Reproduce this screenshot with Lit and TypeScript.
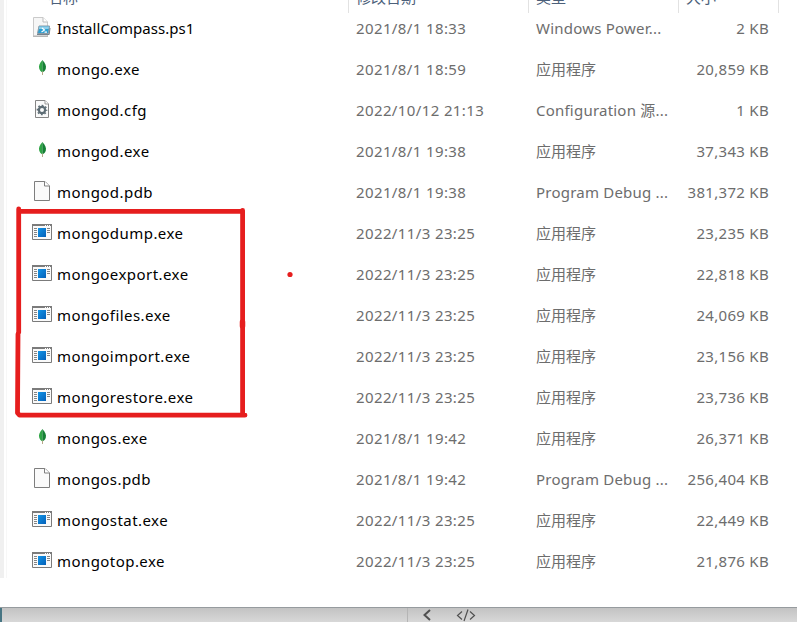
import { LitElement, html, svg, css } from "lit";
import { customElement, property } from "lit/decorators.js";

type Kind = "script" | "leaf" | "config" | "file" | "app";
interface Entry { kind: Kind; name: string; date: string; type: string; size: string; }

const APP = "应用程序";
const e = (kind: Kind, name: string, date: string, type: string, size: string): Entry => ({ kind, name, date, type, size });
const ENTRIES: Entry[] = [
  e("script", "InstallCompass.ps1", "2021/8/1 18:33", "Windows Power...", "2 KB"),
  e("leaf", "mongo.exe", "2021/8/1 18:59", APP, "20,859 KB"),
  e("config", "mongod.cfg", "2022/10/12 21:13", "Configuration 源...", "1 KB"),
  e("leaf", "mongod.exe", "2021/8/1 19:38", APP, "37,343 KB"),
  e("file", "mongod.pdb", "2021/8/1 19:38", "Program Debug ...", "381,372 KB"),
  e("app", "mongodump.exe", "2022/11/3 23:25", APP, "23,235 KB"),
  e("app", "mongoexport.exe", "2022/11/3 23:25", APP, "22,818 KB"),
  e("app", "mongofiles.exe", "2022/11/3 23:25", APP, "24,069 KB"),
  e("app", "mongoimport.exe", "2022/11/3 23:25", APP, "23,156 KB"),
  e("app", "mongorestore.exe", "2022/11/3 23:25", APP, "23,736 KB"),
  e("leaf", "mongos.exe", "2021/8/1 19:42", APP, "26,371 KB"),
  e("file", "mongos.pdb", "2021/8/1 19:42", "Program Debug ...", "256,404 KB"),
  e("app", "mongostat.exe", "2022/11/3 23:25", APP, "22,449 KB"),
  e("app", "mongotop.exe", "2022/11/3 23:25", APP, "21,876 KB"),
];

const ICONS = {
  script: svg`
    <path d="M1.500 1.500H11L15.500 6V20H1.500Z" fill="#f6f6f6" stroke="#cacaca"/>
    <path d="M11 1.500V6H15.500" fill="#fff" stroke="#bcbcbc"/>
    <path d="M1 20.300H16" stroke="#ababab"/>
    <path d="M7 10H17.500L16.500 17.500H5.500Z" fill="#2c9fd2" stroke="#8b9aa5"/>
    <path d="M7.300 10.500H17L16.600 13H6.800Z" fill="#8dd0ec"/>
    <path d="M10 12L12.500 14L9.500 16M12.500 16.200H15" fill="none" stroke="#fff" stroke-width="1.200"/>
    <path d="M5 18.500H17.200L18 12" fill="none" stroke="#75828c"/>`,
  leaf: svg`
    <path d="M10.500 3C7.500 6 6.500 9 7.200 11.500C7.700 13.500 9 14.700 10.400 15.600Z" fill="#2fa546"/>
    <path d="M10.400 3C13.300 6 14.500 9 13.800 11.500C13.200 13.600 12 14.700 10.400 15.600Z" fill="#168035"/>
    <path d="M10.500 14.500V18" stroke="#b7a989"/>`,
  config: svg`
    <path d="M3.500 2.500H13L16.500 6V19.500H3.500Z" fill="#fafafa" stroke="#858585"/>
    <path d="M13 2.500V6H16.500" fill="#fff" stroke="#999"/>
    <circle cx="10" cy="12" r="3.100" fill="none" stroke="#5e6d75" stroke-width="2.200"/>
    <circle cx="10" cy="12" r="4.600" fill="none" stroke="#5e6d75" stroke-width="1.500" stroke-dasharray="1.800 1.813" stroke-dashoffset=".9"/>`,
  file: svg`
    <path d="M2.500 1.500H13L17.500 6V20.500H2.500Z" fill="#fafafa" stroke="#7e7e7e"/>
    <path d="M12.500 1.500V6H17.500" fill="#fff" stroke="#7e7e7e"/>`,
  app: svg`
    <path d="M.5 3.500H19.500V18.500H.5Z" fill="#fafafa" stroke="#7b7b7b"/>
    <path d="M0 4H20" stroke="#7b7b7b" stroke-width="2"/>
    <path d="M13 4.500H14M15 4.500H16M17 4.500H18" stroke="#fff"/>
    <path d="M2 7.500H5M2 9.500H5M2 11.500H5M2 13.500H5M2 15.500H5M15 7.500H18M15 9.500H18M15 11.500H18" stroke="#858585"/>
    <path d="M6 7H14V16H6Z" fill="url(#blue)"/>
    <defs><linearGradient id="blue" x1="0" y1="0" x2="1" y2="1"><stop stop-color="#1195e8"/><stop offset="1" stop-color="#0560b8"/></linearGradient></defs>`,
};

@customElement("file-row")
export class FileRow extends LitElement {
  @property({ attribute: false }) entry!: Entry;
  static styles = css`
    :host { display: grid; grid-template-columns: 25px 299px 180px 133px 100px; height: 41px; align-items: center; color: #6d6d6d; white-space: nowrap; }
    svg { display: block; width: 20px; height: 22px; margin-top: -3px; }
    span { margin-top: -2px; }
    .name { color: #000; letter-spacing: .44px; }
    .name.script { letter-spacing: .04px; }
    .date { letter-spacing: .38px; }
    .type { letter-spacing: .22px; }
    .type.app { letter-spacing: 0; }
    .size { text-align: right; letter-spacing: .3px; }
  `;
  render() {
    const f = this.entry;
    return html`
      <svg viewBox="0 0 20 22">${ICONS[f.kind]}</svg>
      <span class="name ${f.kind}">${f.name}</span>
      <span class="date">${f.date}</span>
      <span class="type ${f.type === APP ? "app" : ""}">${f.type}</span>
      <span class="size">${f.size}</span>`;
  }
}

@customElement("app-root")
export class AppRoot extends LitElement {
  static styles = css`
    :host { display: flex; flex-direction: column; position: relative; width: 797px; height: 622px; overflow: hidden; background: #fff; font: 15px/20px "Noto Sans", "Noto Sans CJK SC", sans-serif; }
    .body { display: flex; height: 578px; }
    .rail { box-sizing: border-box; width: 7px; border-right: 1px solid #f7f7f7; background: linear-gradient(90deg, #f0f0f0 4px, #fff 4px); }
    .list { width: 737px; padding-left: 25px; }
    .head { display: flex; height: 13px; margin-bottom: -5px; color: #4c607a; }
    .head span { box-sizing: border-box; flex: none; height: 13px; line-height: 20px; border-right: 1px solid #e2e2e2; padding-left: 7px; }
    .head b { display: block; margin-top: -13px; font-weight: 400; }
    .c1 { width: 317px; }
    .head .c1 { padding-left: 16px; }
    .c2 { width: 180px; }
    .c3 { width: 150px; }
    .c4 { width: 100px; }
    .foot { box-sizing: border-box; display: flex; height: 15px; margin-top: 29px; border-top: 1px solid #969b9e; background: linear-gradient(#c3c3c3, #d8d8d8); }
    .edge { width: 2px; background: #477583; }
    .left { width: 405px; border-right: 1px solid #b5b5b5; }
    .foot svg { display: block; width: 80px; height: 14px; }
    .mark { position: absolute; left: 0; top: 200px; width: 300px; height: 222px; }
  `;
  render() {
    return html`
      <div class="body">
        <div class="rail"></div>
        <div class="list">
          <div class="head">
            <span class="c1"><b>名称</b></span><span class="c2"><b>修改日期</b></span><span class="c3"><b>类型</b></span><span class="c4"><b>大小</b></span>
          </div>
          ${ENTRIES.map((f) => html`<file-row .entry=${f}></file-row>`)}
        </div>
      </div>
      <div class="foot">
        <div class="edge"></div><div class="left"></div>
        <svg viewBox="0 0 80 14" fill="none" stroke="#505050">
          <path d="M22 2L16.500 7L22 12" stroke-width="2"/>
          <path d="M54 3.500L49.500 7.500L54 11.500M62 3.500L66.500 7.500L62 11.500M60 1.500L56 13" stroke-width="1.200"/>
        </svg>
      </div>
      <svg class="mark" viewBox="0 200 300 222" fill="none" stroke="#e61e1e" stroke-width="4.800" stroke-linecap="round" stroke-linejoin="round">
        <path d="M18.700 209V332.500M18 334L17.500 413L19.500 415.200H245M19 211.300H242.600M242.600 210.500V414"/>
        <path d="M242.500 322V326" stroke-width="5.500"/>
        <circle cx="290" cy="274.500" r="2.600" fill="#e61e1e" stroke="none"/>
      </svg>`;
  }
}
